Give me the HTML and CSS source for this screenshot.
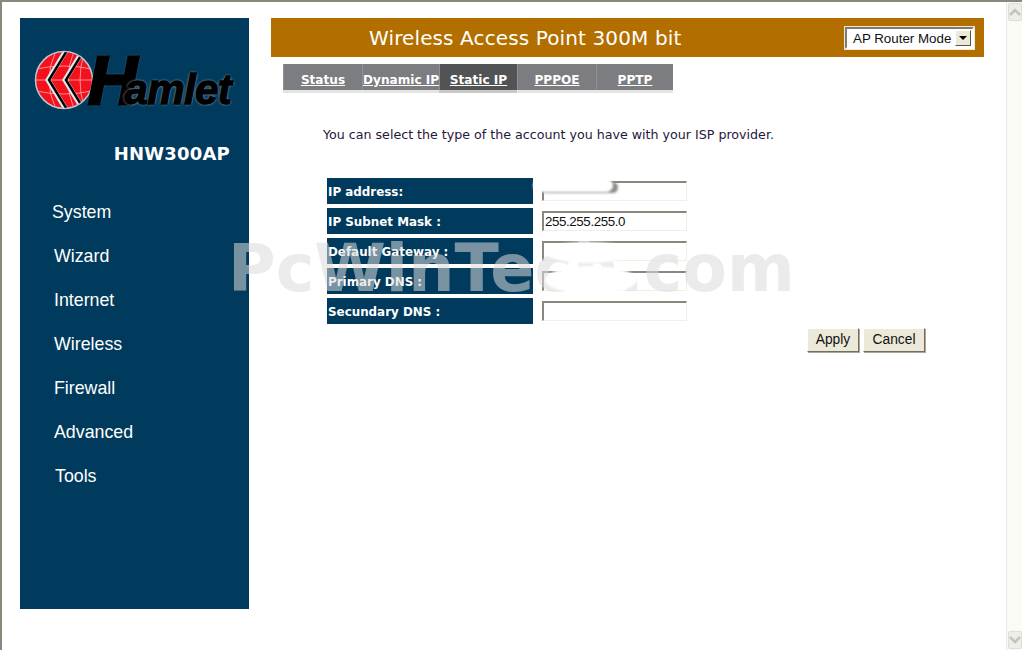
FILE: index.html
```html
<!DOCTYPE html>
<html lang="en">
<head>
    <meta charset="UTF-8">
    <title>Wireless Access Point 300M bit</title>
    <link rel="stylesheet" href="styles.css">
</head>
<body>
    <div class="page">
        <div class="sidebar">
            <div class="logo">
                <svg class="globe" width="60" height="62" viewBox="0 0 60 62">
                    <defs>
                        <clipPath id="ball"><circle cx="30" cy="31" r="28"/></clipPath>
                    </defs>
                    <circle cx="30" cy="31" r="28.5" fill="#f4101c" stroke="#b8c8d2" stroke-width="1.5"/>
                    <g clip-path="url(#ball)" fill="none" stroke="#ffb0b0" stroke-width="0.8">
                        <path d="M2 20 Q30 14 58 20"/>
                        <path d="M1 31 H59"/>
                        <path d="M2 42 Q30 48 58 42"/>
                        <path d="M22 2 Q8 31 22 60"/>
                        <path d="M40 2 Q28 31 40 60"/>
                        <path d="M50 4 Q42 31 50 58"/>
                    </g>
                    <g clip-path="url(#ball)" fill="none" stroke-linejoin="miter">
                        <path d="M33 0 L14 31 L33 62" stroke="#dfe8ec" stroke-width="5"/>
                        <path d="M34 0 L15 31 L34 62" stroke="#000" stroke-width="2.5"/>
                        <path d="M50 0 L31 31 L50 62" stroke="#dfe8ec" stroke-width="5"/>
                        <path d="M51 0 L32 31 L51 62" stroke="#000" stroke-width="2.5"/>
                    </g>
                </svg>
                <div class="brand"><span class="brand-h">H</span>amlet</div>
            </div>
            <div class="model">HNW300AP</div>
            <ul class="menu">
                <li class="shift-left">System</li>
                <li>Wizard</li>
                <li>Internet</li>
                <li>Wireless</li>
                <li>Firewall</li>
                <li>Advanced</li>
                <li class="shift-right">Tools</li>
            </ul>
        </div>

        <div class="main">
            <div class="topbar">
                <div class="title">Wireless Access Point 300M bit</div>
                <div class="mode-select">
                    <span class="mode-label">AP Router Mode</span>
                    <span class="mode-arrow"></span>
                </div>
            </div>

            <div class="tabs">
                <a class="tab">Status</a>
                <a class="tab">Dynamic IP</a>
                <a class="tab active">Static IP</a>
                <a class="tab">PPPOE</a>
                <a class="tab">PPTP</a>
            </div>

            <p class="intro">You can select the type of the account you have with your ISP provider.</p>

            <div class="form">
                <div class="form-row">
                    <div class="field-label">IP address:</div>
                    <div class="field"><span class="input"></span><span class="smudge smudge-a"></span></div>
                </div>
                <div class="form-row">
                    <div class="field-label">IP Subnet Mask :</div>
                    <div class="field"><span class="input">255.255.255.0</span></div>
                </div>
                <div class="form-row">
                    <div class="field-label">Default Gateway :</div>
                    <div class="field"><span class="input"></span><span class="smudge smudge-b"></span></div>
                </div>
                <div class="form-row">
                    <div class="field-label">Primary DNS :</div>
                    <div class="field"><span class="input"></span><span class="smudge smudge-c"></span></div>
                </div>
                <div class="form-row">
                    <div class="field-label">Secundary DNS :</div>
                    <div class="field"><span class="input"></span></div>
                </div>
            </div>

            <div class="actions">
                <button class="btn btn-apply">Apply</button>
                <button class="btn btn-cancel">Cancel</button>
            </div>
        </div>

        <div class="watermark">PcWinTech.com</div>
    </div>

    <div class="scrollbar">
        <div class="scroll-btn">
            <svg width="12" height="8" viewBox="0 0 12 8"><path d="M1 7 L6 2 L11 7" fill="none" stroke="#c4c4bc" stroke-width="2.5"/></svg>
        </div>
        <div class="scroll-btn">
            <svg width="12" height="8" viewBox="0 0 12 8"><path d="M1 1 L6 6 L11 1" fill="none" stroke="#c4c4bc" stroke-width="2.5"/></svg>
        </div>
    </div>
</body>
</html>
```

FILE: styles.css
```css
html, body {
    height: 100%;
}

body {
    margin: 0;
    display: flex;
    overflow: hidden;
    background-color: #fff;
    border-top: 2px solid #8a877c;
    border-left: 2px solid #8a877c;
    box-sizing: border-box;
    font-family: 'DejaVu Sans', sans-serif;
}

.page {
    position: relative;
    flex: 1;
    display: flex;
    align-items: flex-start;
    padding: 16px 22px 0 18px;
    gap: 22px;
}

/* left column */
.sidebar {
    width: 229px;
    height: 591px;
    flex-shrink: 0;
    background-color: #003a5c;
    color: #fff;
}

.logo {
    display: flex;
    align-items: flex-end;
    height: 62px;
    padding: 31px 0 0 14px;
}

.brand {
    font-family: 'Liberation Sans', sans-serif;
    font-style: italic;
    font-weight: bold;
    font-size: 42px;
    line-height: 45px;
    letter-spacing: -0.6px;
    color: #000;
    white-space: nowrap;
    margin-left: -6px;
    margin-bottom: -1px;
    -webkit-text-stroke: 1.4px #000;
    text-shadow: 0 0 3px #a9c0cc, 0 0 2px #a9c0cc;
}

.brand-h {
    font-size: 68px;
    line-height: 45px;
    margin-right: -12px;
    -webkit-text-stroke: 3px #000;
}

.model {
    margin-top: 32px;
    padding-right: 19px;
    text-align: right;
    font-size: 18px;
    letter-spacing: 0.2px;
    font-weight: bold;
    line-height: 22px;
}

.menu {
    list-style: none;
    margin: 35px 0 0;
    padding: 0 0 0 34px;
    font-family: 'Liberation Sans', sans-serif;
    font-size: 17.8px;
}

.menu li {
    height: 44px;
    line-height: 24px;
}

.menu .shift-left {
    margin-left: -2px;
}

.menu .shift-right {
    margin-left: 1px;
}

/* right column */
.main {
    flex: 1;
    min-width: 0;
}

.topbar {
    display: flex;
    align-items: center;
    justify-content: space-between;
    height: 39px;
    padding: 0 10px 0 98px;
    background-color: #b26f00;
}

.title {
    color: #fff;
    font-size: 20px;
    letter-spacing: 0.12px;
}

.mode-select {
    display: flex;
    align-items: center;
    justify-content: space-between;
    box-sizing: border-box;
    width: 129px;
    height: 22px;
    padding: 1px 1px 0 6px;
    background-color: #fff;
    border: 2px solid;
    border-color: #7d7b70 #fff #fff #7d7b70;
    outline: 1px solid #ece9d8;
    font-family: 'Liberation Sans', sans-serif;
    font-size: 13.33px;
    letter-spacing: 0;
    white-space: nowrap;
    color: #111;
}

.mode-arrow {
    position: relative;
    width: 16px;
    height: 16px;
    margin-top: -1px;
    background-color: #ece9d8;
    border: 1px solid;
    border-color: #fff #55544c #55544c #fff;
    box-sizing: border-box;
}

.mode-arrow::after {
    content: "";
    position: absolute;
    left: 3px;
    top: 5px;
    border-left: 4px solid transparent;
    border-right: 4px solid transparent;
    border-top: 4px solid #000;
}

.tabs {
    display: grid;
    grid-template-columns: 79px 77px 78px 79px 77px;
    width: 390px;
    height: 26px;
    margin: 7px 0 0 12px;
    background-color: #7b7d80;
    border-bottom: 3px solid #e4e4e2;
}

.tab {
    display: block;
    position: relative;
    height: 26px;
    line-height: 32px;
    text-align: center;
    white-space: nowrap;
    color: #fff;
    font-size: 12.1px;
    font-weight: bold;
    text-decoration: underline;
    border-left: 1px solid #8f9193;
    box-sizing: border-box;
}

.tab.active {
    background-color: #525355;
    box-shadow: 0 3px 0 #c9c9c6;
}

.intro {
    margin: 34px 0 0 52px;
    font-size: 12.65px;
    line-height: 16px;
    color: #26183a;
}

.form {
    margin: 35px 0 0 56px;
}

.form-row {
    display: flex;
    align-items: center;
    height: 26px;
    margin-bottom: 4px;
}

.field-label {
    width: 206px;
    height: 26px;
    padding-left: 1px;
    box-sizing: border-box;
    background-color: #003a5c;
    color: #fff;
    font-size: 11.9px;
    font-weight: bold;
    line-height: 28px;
    white-space: nowrap;
}

.field {
    position: relative;
    margin-left: 9px;
}

.input {
    display: block;
    box-sizing: border-box;
    width: 145px;
    height: 20px;
    padding-left: 1px;
    border: 1px solid #f1efe2;
    border-top: 2px solid #8a887c;
    border-left: 2px solid #8a887c;
    background-color: #fff;
    font-family: 'Liberation Sans', sans-serif;
    font-size: 13.33px;
    letter-spacing: -0.4px;
    line-height: 18px;
    color: #111;
}

/* white scribbles that hide the real addresses, they sit over the watermark too */
.smudge {
    position: absolute;
    z-index: 2;
    background-color: #fff;
    filter: blur(1px);
}

.smudge-a {
    left: -9px;
    top: -2px;
    width: 80px;
    height: 13px;
    border-radius: 8px;
    box-shadow: 6px 2px 1px -1px #8c8c84;
}

.smudge-b {
    left: 3px;
    top: 1px;
    width: 86px;
    height: 21px;
    border-radius: 50%;
}

.smudge-c {
    left: 3px;
    top: -5px;
    width: 92px;
    height: 28px;
    border-radius: 50%;
}

.actions {
    display: flex;
    justify-content: flex-end;
    gap: 4px;
    margin: 0 59px 0 0;
}

.btn {
    height: 24px;
    padding: 0 0 2px;
    background-color: #ece9d8;
    border: 1px solid;
    border-color: #fff #716f64 #716f64 #fff;
    box-shadow: 1px 1px 0 #aca899;
    font-family: 'Liberation Sans', sans-serif;
    font-size: 13.8px;
    color: #111;
}

.btn-apply {
    width: 52px;
    margin-left: -1px;
}

.btn-cancel {
    width: 62px;
}

.watermark {
    position: absolute;
    left: 226px;
    top: 234px;
    font-family: 'DejaVu Sans', sans-serif;
    font-size: 65px;
    line-height: 66px;
    font-weight: bold;
    white-space: nowrap;
    color: rgba(219, 219, 219, 0.55);
    pointer-events: none;
}

.scrollbar {
    display: flex;
    flex-direction: column;
    justify-content: space-between;
    width: 16px;
    flex-shrink: 0;
    box-sizing: border-box;
    background-color: #fbfbf6;
    border-left: 1px solid #e9e9e2;
    padding: 1px 0 1px 1px;
}

.scroll-btn {
    display: flex;
    align-items: center;
    justify-content: center;
    height: 16px;
    background-color: #eeeee8;
    border: 1px solid #dedfd8;
    border-radius: 2px;
}
```
